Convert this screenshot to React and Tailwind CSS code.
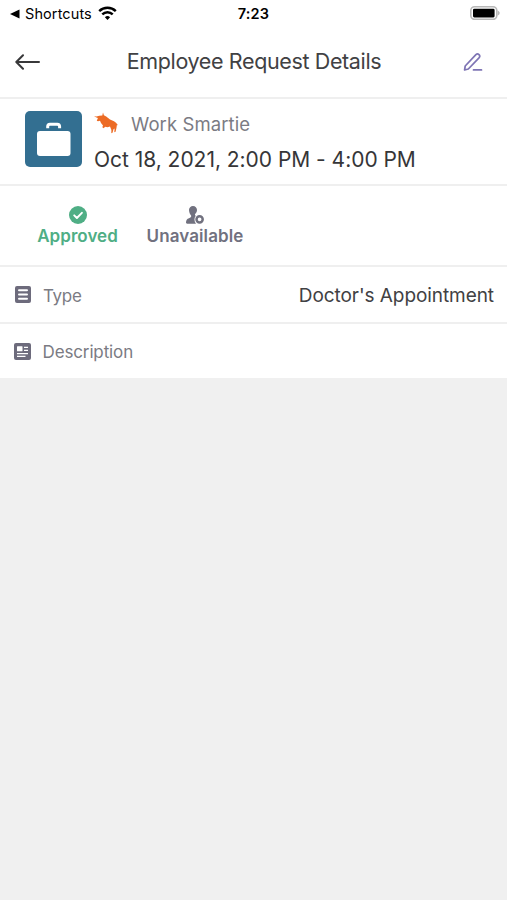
function StatusBar() {
  return (
    <div className="flex h-[28px] items-center justify-between pl-[10px] pr-[7px] text-black">
      <div className="flex w-[200px] items-center">
        <svg width="10" height="10" viewBox="0 0 10 10">
          <path d="M0 5 9.500 .6v8.800z" fill="currentColor" />
        </svg>
        <span className="ml-[5px] whitespace-nowrap text-[14.5px] leading-[28px] tracking-[0.1px]">Shortcuts</span>
        <svg className="-mt-[2px] ml-[6px]" width="19" height="14" viewBox="0 0 19 14" fill="none" stroke="currentColor" strokeWidth="2.4">
          <path d="M1.200 5.200a11.800 11.800 0 0 1 16.600 0M4.300 8.400a7.300 7.300 0 0 1 10.400 0" />
          <path d="M9.500 14 6.900 11.200a3.700 3.700 0 0 1 5.200 0z" fill="currentColor" stroke="none" />
        </svg>
      </div>
      <span className="text-[14.5px] font-semibold leading-[28px] tracking-[0.2px]">7:23</span>
      <div className="-mt-[2px] flex w-[203px] justify-end">
        <svg width="30" height="14" viewBox="0 0 30 14">
          <rect x=".8" y=".8" width="26" height="12.600" rx="3.800" fill="#fff" stroke="#b8b8b8" strokeWidth="1.600" />
          <rect x="3" y="2.800" width="21.600" height="8.600" rx="1.300" fill="#000" />
          <path d="M27.600 4.500c2.800 1.200 2.800 4 0 5.200z" fill="#b8b8b8" />
        </svg>
      </div>
    </div>
  );
}

function Header() {
  return (
    <header className="flex h-[71px] items-center justify-between border-b-2 border-[#efefef] pb-px pl-[15px] pr-[24px]">
      <svg width="26" height="18" viewBox="0 0 26 18" fill="none" stroke="#38383a" strokeWidth="2" strokeLinecap="round" strokeLinejoin="round">
        <path d="M24 9H1.500M8 2.200 1.300 9 8 15.800" />
      </svg>
      <h1 className="-mt-[3px] ml-[4px] whitespace-nowrap text-[21.5px] leading-[28px] tracking-[-0.37px] text-[#414143]">Employee Request Details</h1>
      <svg width="20" height="20" viewBox="0 0 20 20" fill="none" stroke="#7e74b4" strokeWidth="1.700" strokeLinecap="round" strokeLinejoin="round">
        <path d="M1.600 18 2.200 14 12.900 2.700a2.200 2.200 0 0 1 3.100 0 2.200 2.200 0 0 1 0 3.100L5.300 17z" />
        <path d="M10.500 17.900h8" />
      </svg>
    </header>
  );
}

function Summary() {
  return (
    <section className="flex h-[87px] border-b-2 border-[#efefef] pl-[25px] pt-[12px]">
      <div className="h-[56px] w-[57px] rounded-[5px] bg-[#336f91]">
        <svg width="57" height="56" viewBox="0 0 57 56">
          <path d="M22.700 17.300v-1.800q0-2.300 2.300-2.300h7.300q2.300 0 2.300 2.300v1.800" fill="none" stroke="#fff" strokeWidth="3" />
          <rect x="12" y="20" width="33.500" height="25" rx="3" fill="#fff" />
        </svg>
      </div>
      <div className="ml-[12px]">
        <div className="flex h-[26px] items-center">
          <svg className="-mt-[3px]" width="25" height="22" viewBox="0 0 25 22" fill="#ec6b25">
            <path d="M0 4.200 2.500 4.600 5.300 3.700 8.300 3.400 9 .6 9.900 3.300 12.200 4.600 16 7.600 20 9.300 22 10.800 24 13.300 22.900 13 22.400 16.300 21.600 19.800 20.300 20.300 20.600 16.500 19.500 17.300 18.500 20.800 17.300 21.300 17.400 18 16 14.600 13.500 15.300 11 14.700 9.800 16.300 8.300 15.300 9 13.500 7 11 6 8.800 4 9.300 2.800 8.700 3.900 6 2.500 5.600Z" />
          </svg>
          <span className="ml-[12px] whitespace-nowrap text-[18.5px] leading-[26px] tracking-[0.1px] text-[#7b7b83]">Work Smartie</span>
        </div>
        <div className="mt-[9px] whitespace-nowrap text-[21px] leading-[28px] tracking-[-0.03px] text-[#363638]">Oct 18, 2021, 2:00 PM - 4:00 PM</div>
      </div>
    </section>
  );
}

function Statuses() {
  return (
    <section className="flex h-[81px] border-b-2 border-[#efefef] pl-[37px] pt-[20px]">
      <div className="flex w-[81px] flex-col items-center text-[#4fae85]">
        <svg width="18" height="18" viewBox="0 0 18 18">
          <circle cx="9" cy="9" r="9" fill="currentColor" />
          <path d="m5.200 9.300 2.700 2.700 5-5.200" fill="none" stroke="#fff" strokeWidth="1.900" strokeLinecap="round" strokeLinejoin="round" />
        </svg>
        <span className="mt-px whitespace-nowrap text-[17px] font-semibold leading-[22px] tracking-[0.05px]">Approved</span>
      </div>
      <div className="ml-[28px] flex w-[98px] flex-col items-center text-[#71717f]">
        <svg width="18" height="18" viewBox="0 0 18 18" fill="currentColor">
          <path d="M7 0c2.300 0 4 1.700 4 4 0 1.700-.8 3-1.900 4.100-.4.900 0 1.400.7 1.700-1.800 2-1.800 5.500.2 7.900H1.200C.5 17.700 0 17.200 0 16.500c0-2.300 1-3.700 3-4.300 1.500-.5 2.300-1.100 2.200-2.500C4 8.300 3 6.200 3 4c0-2.300 1.700-4 4-4Z" />
          <circle cx="13.600" cy="13.300" r="3.100" fill="none" stroke="currentColor" strokeWidth="2.500" />
        </svg>
        <span className="mt-px whitespace-nowrap text-[17px] font-semibold leading-[22px] tracking-[0.1px]">Unavailable</span>
      </div>
    </section>
  );
}

function TypeIcon() {
  return (
    <svg width="16" height="17" viewBox="0 0 16 17">
      <rect width="16" height="17" rx="2" fill="#6d6b7c" />
      <path d="M4 4.300h8M4 8.500h8M4 12.700h8" stroke="#fff" strokeWidth="2" strokeLinecap="round" />
    </svg>
  );
}

function DescriptionIcon() {
  return (
    <svg width="17" height="17" viewBox="0 0 17 17">
      <rect width="17" height="17" rx="2" fill="#6d6b7c" />
      <rect x="3" y="3.300" width="5.500" height="5" rx=".5" fill="#fff" />
      <path d="M10 4.300h4M10 7.300h4M3 10.700h11M3 13.300h8.500" stroke="#fff" strokeWidth="1.200" />
    </svg>
  );
}

export default function App() {
  return (
    <div className="flex h-[900px] w-[507px] flex-col overflow-hidden bg-[#f0f0f0] font-['Inter',sans-serif]">
      <main className="bg-white">
        <StatusBar />
        <Header />
        <Summary />
        <Statuses />
        <div className="flex h-[57px] items-center border-b-2 border-[#efefef] pl-[15px] pr-[13px]">
          <TypeIcon />
          <span className="ml-[12px] mt-[2px] text-[17px] leading-[24px] tracking-[-0.3px] text-[#7b7b83]">Type</span>
          <span className="ml-auto mt-[2px] whitespace-nowrap text-[19px] leading-[26px] tracking-[-0.07px] text-[#414143]">Doctor's Appointment</span>
        </div>
        <div className="flex h-[54px] items-center pl-[14px]">
          <DescriptionIcon />
          <span className="ml-[11.5px] mt-px text-[17px] leading-[24px] tracking-[-0.13px] text-[#7b7b83]">Description</span>
        </div>
      </main>
    </div>
  );
}
